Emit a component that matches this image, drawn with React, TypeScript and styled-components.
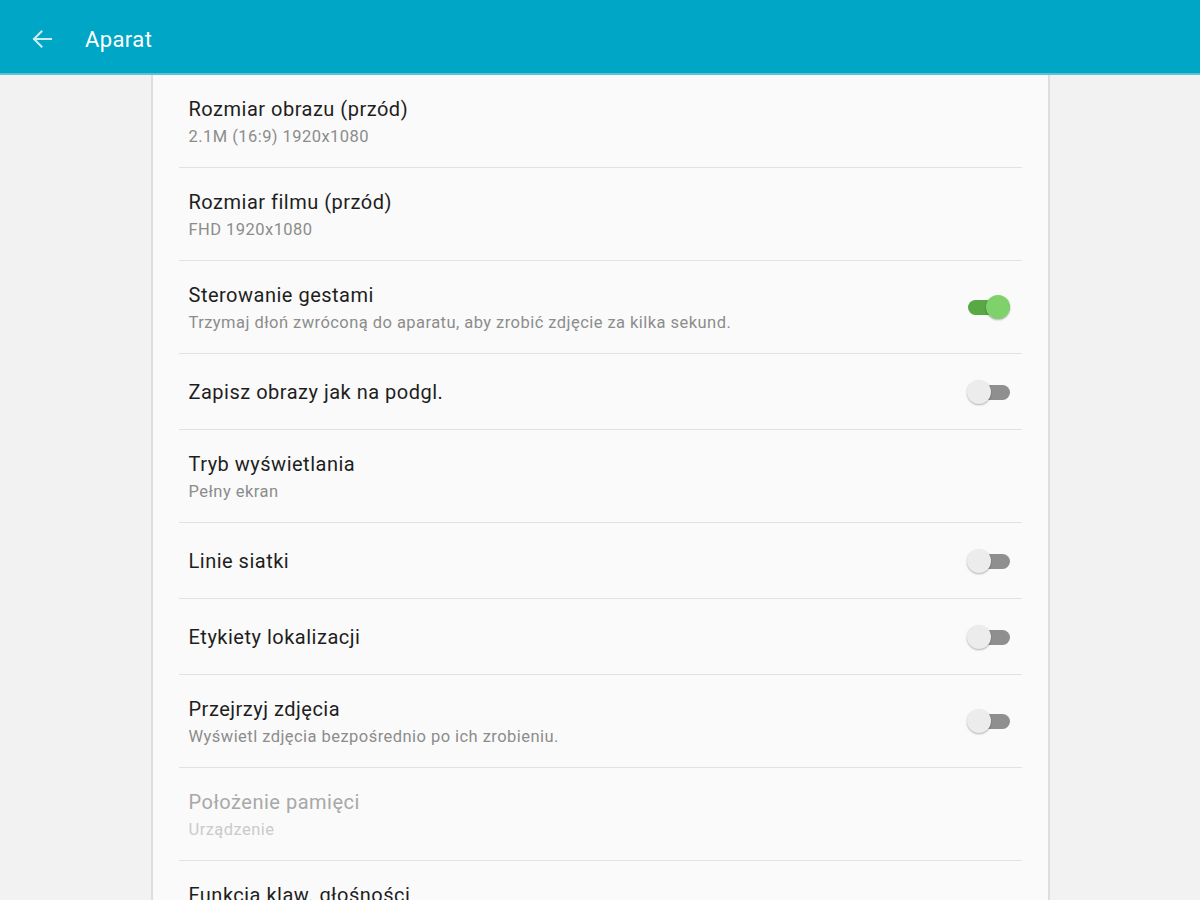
import React from "react";
import styled, { createGlobalStyle } from "styled-components";

const Global = createGlobalStyle`
  html, body { margin: 0; padding: 0; }
  *, *::before, *::after { box-sizing: border-box; }
  body {
    background: #f2f2f2;
    font-family: Roboto, "Noto Sans", Arial, sans-serif;
    overflow: hidden;
  }
`;

const Page = styled.div`
  width: 1200px;
  height: 900px;
  display: flex;
  flex-direction: column;
  background: #f2f2f2;
  overflow: hidden;
`;

const Header = styled.header`
  height: 75px;
  flex: 0 0 auto;
  background: #00a6c6;
  border-bottom: 2px solid #5cc3d7;
  display: flex;
  align-items: center;
  padding: 5px 0 0 31px;
  gap: 32px;
`;

const BackButton = styled.button`
  border: 0;
  background: transparent;
  padding: 0;
  width: 22px;
  height: 22px;
  display: flex;
  align-items: center;
  justify-content: center;
  cursor: pointer;
`;

const Title = styled.h1`
  margin: 0;
  font-size: 22px;
  font-weight: 400;
  color: #ffffff;
  letter-spacing: 0.4px;
`;

const Body = styled.div`
  flex: 1;
  display: flex;
  justify-content: center;
  overflow: hidden;
`;

const Panel = styled.div`
  width: 899px;
  background: #fafafa;
  border-left: 2px solid #dedede;
  border-right: 2px solid #dedede;
  padding: 0 26px;
  display: flex;
  flex-direction: column;
`;

const Row = styled.div<{ $tall: boolean }>`
  height: ${(p) => (p.$tall ? 93 : 76)}px;
  flex: 0 0 auto;
  border-bottom: 1px solid #e2e2e2;
  display: flex;
  align-items: center;
  justify-content: space-between;
  padding: 2px 11px 0 10px;
`;

const Texts = styled.div`
  display: flex;
  flex-direction: column;
  gap: 4px;
`;

const RowTitle = styled.div<{ $disabled?: boolean }>`
  font-size: 20px;
  line-height: 25px;
  letter-spacing: 0.5px;
  color: ${(p) => (p.$disabled ? "#a8a8a8" : "#1e1e1e")};
`;

const RowSub = styled.div<{ $disabled?: boolean }>`
  font-size: 16.5px;
  line-height: 21px;
  letter-spacing: 0.45px;
  color: ${(p) => (p.$disabled ? "#cacaca" : "#8c8c8c")};
`;

const Switch = styled.div`
  position: relative;
  width: 44px;
  height: 26px;
  flex: 0 0 auto;
`;

const Track = styled.div<{ $on: boolean }>`
  position: absolute;
  left: 1px;
  right: 1px;
  top: 5px;
  height: 15px;
  border-radius: 8px;
  background: ${(p) => (p.$on ? "#58a845" : "#8f8f8f")};
`;

const Thumb = styled.div<{ $on: boolean }>`
  position: absolute;
  top: 0;
  left: ${(p) => (p.$on ? "19px" : "0px")};
  width: 24px;
  height: 24px;
  border-radius: 50%;
  background: ${(p) => (p.$on ? "#7fd16c" : "#ececec")};
  box-shadow: 0 1px 2px rgba(0, 0, 0, 0.3);
`;

type Item = {
  title: string;
  sub?: string;
  toggle?: boolean;
  disabled?: boolean;
};

const items: Item[] = [
  { title: "Rozmiar obrazu (przód)", sub: "2.1M (16:9) 1920x1080" },
  { title: "Rozmiar filmu (przód)", sub: "FHD 1920x1080" },
  {
    title: "Sterowanie gestami",
    sub: "Trzymaj dłoń zwróconą do aparatu, aby zrobić zdjęcie za kilka sekund.",
    toggle: true,
  },
  { title: "Zapisz obrazy jak na podgl.", toggle: false },
  { title: "Tryb wyświetlania", sub: "Pełny ekran" },
  { title: "Linie siatki", toggle: false },
  { title: "Etykiety lokalizacji", toggle: false },
  {
    title: "Przejrzyj zdjęcia",
    sub: "Wyświetl zdjęcia bezpośrednio po ich zrobieniu.",
    toggle: false,
  },
  { title: "Położenie pamięci", sub: "Urządzenie", disabled: true },
  { title: "Funkcja klaw. głośności", sub: "Zrób zdjęcie" },
];

export default function App() {
  return (
    <Page>
      <Global />
      <Header>
        <BackButton aria-label="Wstecz">
          <svg width="20" height="18" viewBox="0 0 20 18" fill="none">
            <path
              d="M19 9H2M9.5 1.5L2 9l7.5 7.5"
              stroke="#cdeef5"
              strokeWidth="2"
              strokeLinecap="square"
            />
          </svg>
        </BackButton>
        <Title>Aparat</Title>
      </Header>
      <Body>
        <Panel>
          {items.map((it) => (
            <Row key={it.title} $tall={!!it.sub}>
              <Texts>
                <RowTitle $disabled={it.disabled}>{it.title}</RowTitle>
                {it.sub && <RowSub $disabled={it.disabled}>{it.sub}</RowSub>}
              </Texts>
              {it.toggle !== undefined && (
                <Switch>
                  <Track $on={it.toggle} />
                  <Thumb $on={it.toggle} />
                </Switch>
              )}
            </Row>
          ))}
        </Panel>
      </Body>
    </Page>
  );
}
